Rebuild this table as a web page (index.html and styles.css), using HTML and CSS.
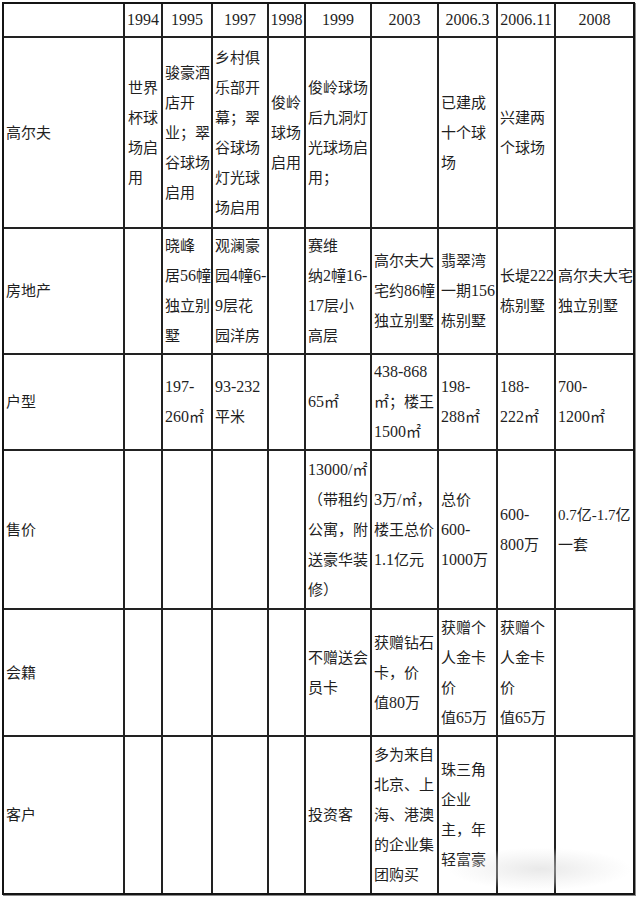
FILE: index.html
```html
<!DOCTYPE html>
<html lang="zh-CN">
<head>
<meta charset="utf-8">
<title>高尔夫地产发展历程</title>
<link rel="stylesheet" href="styles.css">
</head>
<body>
<div class="sheet">
  <div class="grid">
    <div class="c h"></div>
    <div class="c h">1994</div>
    <div class="c h">1995</div>
    <div class="c h">1997</div>
    <div class="c h">1998</div>
    <div class="c h">1999</div>
    <div class="c h">2003</div>
    <div class="c h">2006.3</div>
    <div class="c h">2006.11</div>
    <div class="c h">2008</div>

    <div class="c"><div class="t">高尔夫</div></div>
    <div class="c p3"><div class="t">世界<br>杯球<br>场启<br>用</div></div>
    <div class="c"><div class="t">骏豪酒<br>店开<br>业；翠<br>谷球场<br>启用</div></div>
    <div class="c"><div class="t">乡村俱<br>乐部开<br>幕；翠<br>谷球场<br>灯光球<br>场启用</div></div>
    <div class="c"><div class="t">俊岭<br>球场<br>启用</div></div>
    <div class="c"><div class="t">俊岭球场<br>后九洞灯<br>光球场启<br>用；</div></div>
    <div class="c"></div>
    <div class="c"><div class="t">已建成<br>十个球<br>场</div></div>
    <div class="c"><div class="t">兴建两<br>个球场</div></div>
    <div class="c"></div>

    <div class="c"><div class="t">房地产</div></div>
    <div class="c"></div>
    <div class="c"><div class="t">晓峰<br>居<span class="n">56</span>幢<br>独立别<br>墅</div></div>
    <div class="c"><div class="t">观澜豪<br>园<span class="n">4</span>幢<span class="n">6-</span><br><span class="n">9</span>层花<br>园洋房</div></div>
    <div class="c"></div>
    <div class="c"><div class="t">赛维<br>纳<span class="n">2</span>幢<span class="n">16-</span><br><span class="n">17</span>层小<br>高层</div></div>
    <div class="c"><div class="t">高尔夫大<br>宅约<span class="n">86</span>幢<br>独立别墅</div></div>
    <div class="c"><div class="t">翡翠湾<br>一期<span class="n">156</span><br>栋别墅</div></div>
    <div class="c"><div class="t">长堤<span class="n">222</span><br>栋别墅</div></div>
    <div class="c"><div class="t">高尔夫大宅<br>独立别墅</div></div>

    <div class="c"><div class="t">户型</div></div>
    <div class="c"></div>
    <div class="c"><div class="t"><span class="n">197-</span><br><span class="n">260</span>㎡</div></div>
    <div class="c"><div class="t"><span class="n">93-232</span><br>平米</div></div>
    <div class="c"></div>
    <div class="c"><div class="t"><span class="n">65</span>㎡</div></div>
    <div class="c"><div class="t"><span class="n">438-868</span><br>㎡；楼王<br><span class="n">1500</span>㎡</div></div>
    <div class="c"><div class="t"><span class="n">198-</span><br><span class="n">288</span>㎡</div></div>
    <div class="c"><div class="t"><span class="n">188-</span><br><span class="n">222</span>㎡</div></div>
    <div class="c"><div class="t"><span class="n">700-</span><br><span class="n">1200</span>㎡</div></div>

    <div class="c"><div class="t">售价</div></div>
    <div class="c"></div>
    <div class="c"></div>
    <div class="c"></div>
    <div class="c"></div>
    <div class="c"><div class="t"><span class="n">13000/</span>㎡<br>（带租约<br>公寓，附<br>送豪华装<br>修）</div></div>
    <div class="c"><div class="t"><span class="n">3</span>万<span class="n">/</span>㎡，<br>楼王总价<br><span class="n">1.1</span>亿元</div></div>
    <div class="c"><div class="t">总价<br><span class="n">600-</span><br><span class="n">1000</span>万</div></div>
    <div class="c"><div class="t"><span class="n">600-</span><br><span class="n">800</span>万</div></div>
    <div class="c"><div class="t">0.7亿-1.7亿<br>一套</div></div>

    <div class="c"><div class="t">会籍</div></div>
    <div class="c"></div>
    <div class="c"></div>
    <div class="c"></div>
    <div class="c"></div>
    <div class="c"><div class="t">不赠送会<br>员卡</div></div>
    <div class="c"><div class="t">获赠钻石<br>卡，价<br>值<span class="n">80</span>万</div></div>
    <div class="c"><div class="t">获赠个<br>人金卡<br>价<br>值<span class="n">65</span>万</div></div>
    <div class="c"><div class="t">获赠个<br>人金卡<br>价<br>值<span class="n">65</span>万</div></div>
    <div class="c"></div>

    <div class="c"><div class="t">客户</div></div>
    <div class="c"></div>
    <div class="c"></div>
    <div class="c"></div>
    <div class="c"></div>
    <div class="c"><div class="t">投资客</div></div>
    <div class="c"><div class="t">多为来自<br>北京、上<br>海、港澳<br>的企业集<br>团购买</div></div>
    <div class="c"><div class="t">珠三角<br>企业<br>主，年<br>轻富豪</div></div>
    <div class="c"></div>
    <div class="c"></div>
  </div>
  <div class="watermark"></div>
</div>
</body>
</html>
```

FILE: styles.css
```css
html, body {
  margin: 0;
  padding: 0;
  background: #ffffff;
}

body {
  font-family: "Liberation Serif", "Noto Sans CJK SC", serif;
  color: #1f1f1f;
}

.sheet {
  position: relative;
  width: 640px;
  height: 898px;
  overflow: hidden;
}

.grid {
  margin: 2px 0 0 2px;
  width: 633px;
  height: 893px;
  box-sizing: border-box;
  border: 2px solid #141414;
  box-shadow: 1px 1px 0 #8a8a8a;
  display: grid;
  grid-template-columns: 121px 38px 50px 56px 37px 66px 67px 59px 58px 77px;
  grid-template-rows: 34px 191px 126px 96px 159px 127px 156px;
}

.c {
  box-sizing: border-box;
  border-right: 2px solid #222222;
  border-bottom: 2px solid #222222;
  display: flex;
  align-items: center;
  justify-content: flex-start;
  padding: 0 0 0 2px;
  font-size: 15px;
  line-height: 30px;
  white-space: nowrap;
}

.c:nth-child(10n) {
  border-right: none;
}

.c:nth-last-child(-n+10) {
  border-bottom: none;
}

.t {
  display: block;
}

.n {
  font-size: 16px;
}

.h {
  justify-content: center;
  text-align: center;
  padding: 0;
  font-size: 16px;
  line-height: 20px;
}

.p3 {
  padding-left: 3px;
}

.watermark {
  position: absolute;
  left: 450px;
  top: 848px;
  width: 180px;
  height: 42px;
  background: radial-gradient(ellipse at center, rgba(215, 215, 215, 0.55) 0%, rgba(230, 230, 230, 0.3) 45%, rgba(255, 255, 255, 0) 72%);
  pointer-events: none;
}
```
